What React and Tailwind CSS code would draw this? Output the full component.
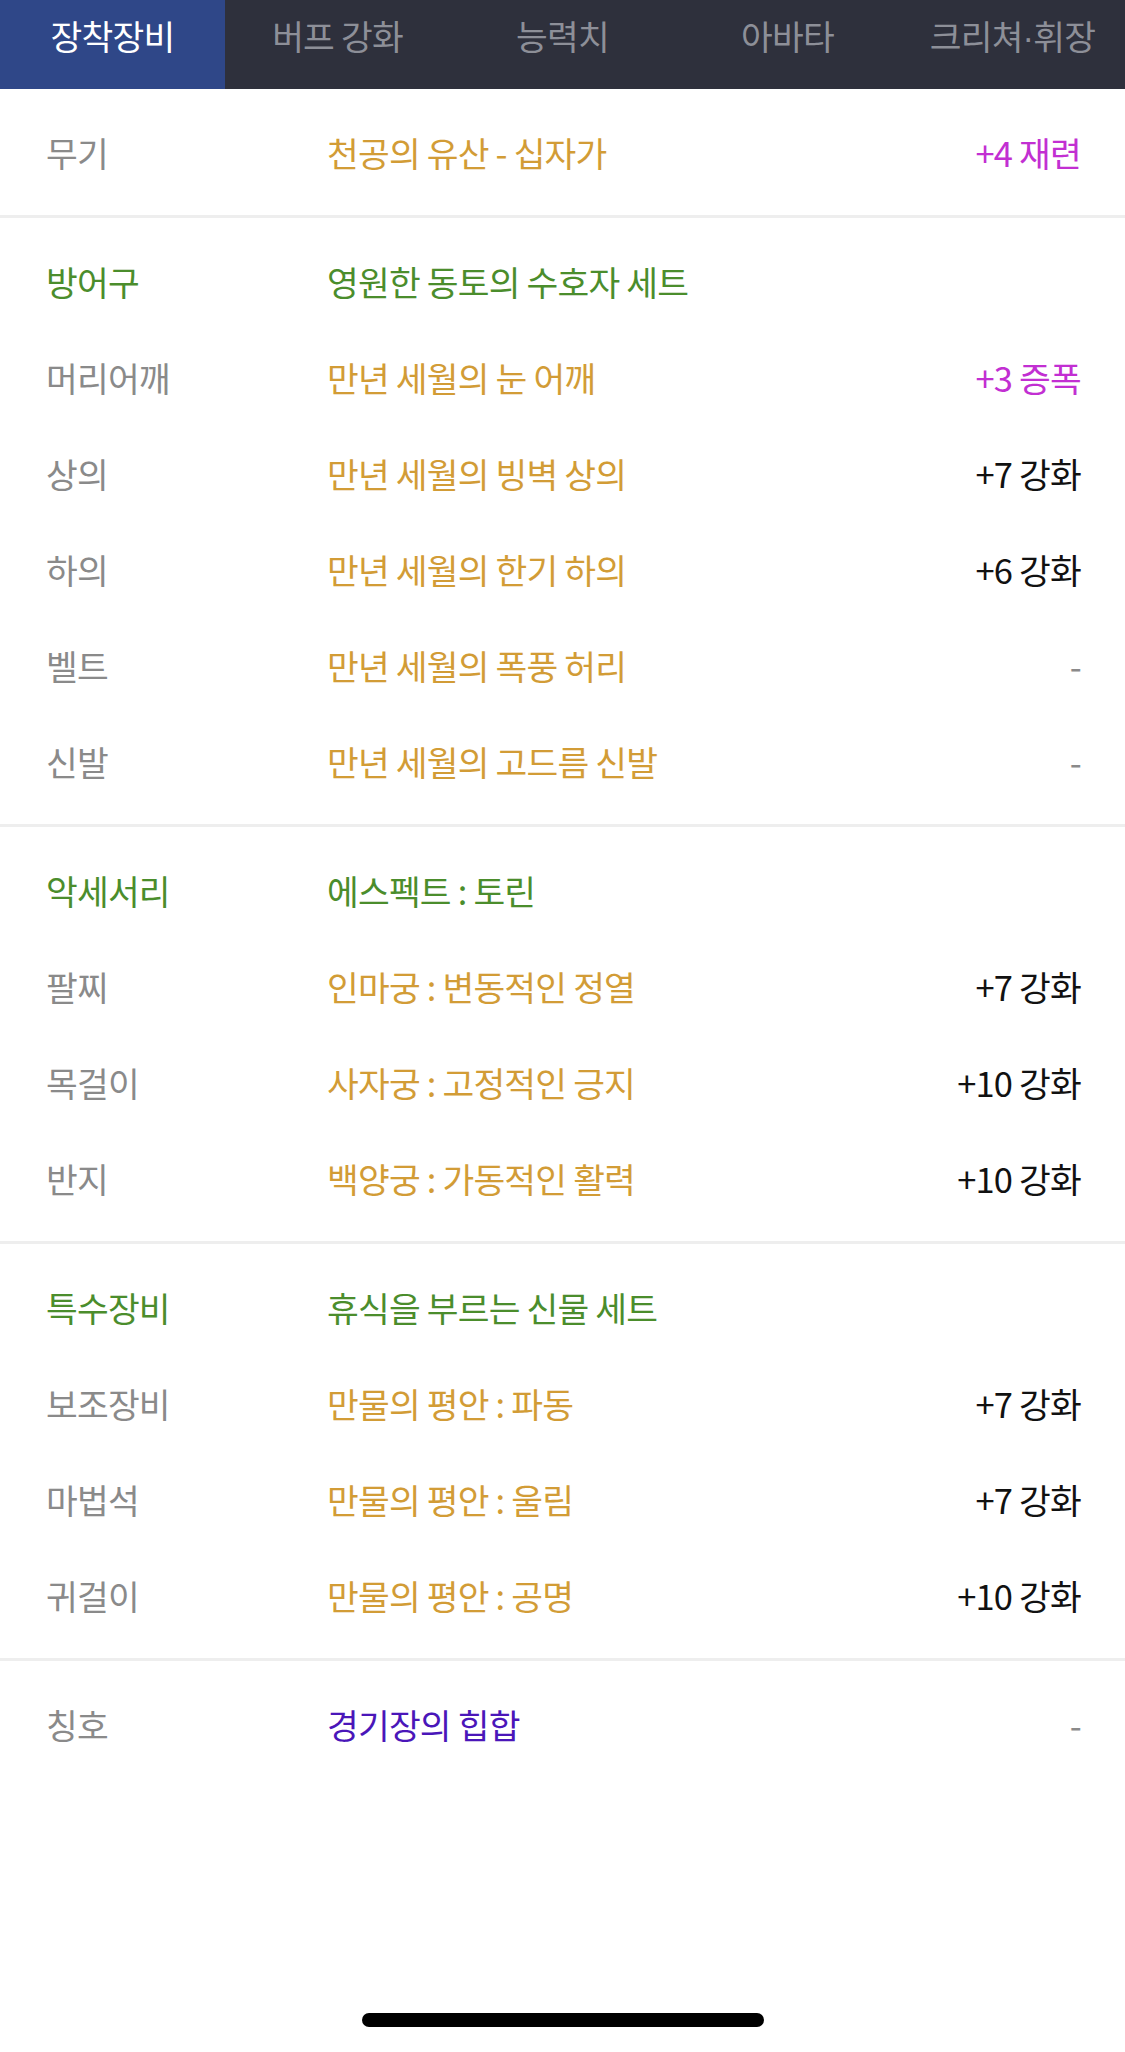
import React from "react";

const tabs = ["장착장비", "버프 강화", "능력치", "아바타", "크리쳐·휘장"];

const GOLD = "text-[#d29c36]";
const GREEN = "text-[#4b8d2c]";

const sections = [
    {
        rows: [{ label: "무기", name: "천공의 유산 - 십자가", value: "+4 재련", valueColor: "text-[#c22fd2]" }]
    },
    {
        header: { label: "방어구", name: "영원한 동토의 수호자 세트" },
        rows: [
            { label: "머리어깨", name: "만년 세월의 눈 어깨", value: "+3 증폭", valueColor: "text-[#c22fd2]" },
            { label: "상의", name: "만년 세월의 빙벽 상의", value: "+7 강화" },
            { label: "하의", name: "만년 세월의 한기 하의", value: "+6 강화" },
            { label: "벨트", name: "만년 세월의 폭풍 허리", value: "-" },
            { label: "신발", name: "만년 세월의 고드름 신발", value: "-" }
        ]
    },
    {
        header: { label: "악세서리", name: "에스펙트 : 토린" },
        rows: [
            { label: "팔찌", name: "인마궁 : 변동적인 정열", value: "+7 강화" },
            { label: "목걸이", name: "사자궁 : 고정적인 긍지", value: "+10 강화" },
            { label: "반지", name: "백양궁 : 가동적인 활력", value: "+10 강화" }
        ]
    },
    {
        header: { label: "특수장비", name: "휴식을 부르는 신물 세트" },
        rows: [
            { label: "보조장비", name: "만물의 평안 : 파동", value: "+7 강화" },
            { label: "마법석", name: "만물의 평안 : 울림", value: "+7 강화" },
            { label: "귀걸이", name: "만물의 평안 : 공명", value: "+10 강화" }
        ]
    },
    {
        rows: [{ label: "칭호", name: "경기장의 힙합", nameColor: "text-[#4a16b9]", value: "-" }]
    }
];

const Row = ({ label, name, value, labelColor, nameColor, valueColor }) => (
    <div className="flex h-[96px] items-center pl-[46px] pr-[44px] text-[34.5px] leading-none tracking-[-0.8px]">
        <div className={`w-[281px] shrink-0 ${labelColor || "text-[#8a8a8a]"}`}>{label}</div>
        <div className={`flex-1 ${nameColor || GOLD}`}>{name}</div>
        {value && (
            <div className={value === "-" ? "text-[#8a8a8a]" : valueColor || "text-[#111111]"}>{value}</div>
        )}
    </div>
);

const TabLabel = ({ text }) => {
    // the middle dot is narrow in the reference font
    const parts = text.split("·");
    if (parts.length === 1) return text;
    return (
        <>
            {parts[0]}
            <span style={{ fontFamily: '"Liberation Sans", sans-serif' }}>·</span>
            {parts[1]}
        </>
    );
};

const App = () => {
    return (
        <div
            className="flex min-h-[2052px] w-[1125px] flex-col bg-white"
            style={{ fontFamily: '"Noto Sans CJK KR", "Noto Sans", sans-serif' }}
        >
            {/* Tab bar */}
            <div className="flex h-[89px] bg-[#2e303c]">
                {tabs.map((tab, index) => (
                    <div
                        key={index}
                        className={`flex flex-1 justify-center pt-[18px] text-[34.5px] leading-none tracking-[-0.8px] ${
                            index === 0 ? "bg-[#2f4788] text-white" : "text-[#8d8f98]"
                        }`}
                    >
                        <span>
                            <TabLabel text={tab} />
                        </span>
                    </div>
                ))}
            </div>

            {/* Equipment list */}
            {sections.map((section, index) => (
                <div
                    key={index}
                    className={`py-[15px] ${index < sections.length - 1 ? "border-b-[3px] border-[#eeeeee]" : ""}`}
                >
                    {section.header && (
                        <Row
                            label={section.header.label}
                            name={section.header.name}
                            labelColor={GREEN}
                            nameColor={GREEN}
                        />
                    )}
                    {section.rows.map((row, rowIndex) => (
                        <Row key={rowIndex} {...row} />
                    ))}
                </div>
            ))}

            <div className="flex-1" />

            {/* Home indicator */}
            <div className="mb-[25px] flex justify-center">
                <div className="h-[14px] w-[402px] rounded-full bg-black" />
            </div>
        </div>
    );
};

export default App;
